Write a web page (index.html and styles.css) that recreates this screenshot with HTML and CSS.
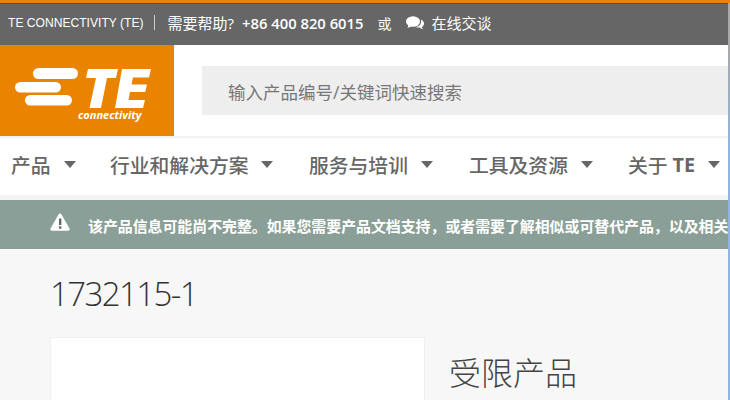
FILE: index.html
```html
<!DOCTYPE html>
<html lang="zh">
<head>
<meta charset="utf-8">
<title>1732115-1</title>
<link rel="stylesheet" href="styles.css">
</head>
<body>
<div class="page">
  <div class="topbar">
    <span class="brand">TE CONNECTIVITY (TE)</span>
    <span class="sep"></span>
    <span class="help">需要帮助?</span>
    <span class="phone">+86 400 820 6015</span>
    <span class="or">或</span>
    <svg class="chat" viewBox="0 0 18 14" width="18" height="14"><ellipse cx="7" cy="5.5" rx="7" ry="5.2" fill="#fff"/><path d="M2.500 8.500 1.500 12 6 10z" fill="#fff"/><path d="M14.800 3.400C16.800 4.300 18 5.800 18 7.500c0 1.400-.8 2.600-2 3.400l.8 2.500-3.300-1.800c-1.400.1-2.800-.1-3.900-.7 3.300-.2 6.400-2.700 5.200-7.500z" fill="#fff"/></svg>
    <span class="chat-text">在线交谈</span>
  </div>
  <header class="header">
    <div class="logo">
      <svg viewBox="0 0 174 91" width="174" height="91">
        <rect x="33" y="23" width="45" height="11" rx="5.500" fill="#fff"/>
        <rect x="15" y="37" width="46" height="10.500" rx="5.200" fill="#fff"/>
        <rect x="25" y="50" width="47" height="10.500" rx="5.200" fill="#fff"/>
        <path d="M88 24H118L116 33H107L101 63H89.500L96 33H86Z" fill="#fff"/>
        <path d="M122 24H151L149 32.500H133L131.500 39.500H147L145.200 47H130L128.500 55H145L143 63H115Z" fill="#fff"/>
        <text x="78" y="74" class="logo-text">connectivity</text>
      </svg>
    </div>
    <div class="search-wrap">
      <div class="search">输入产品编号/关键词快速搜索</div>
    </div>
  </header>
  <nav class="nav">
    <span class="nav-item w1">产品<i class="caret"></i></span>
    <span class="nav-item w2">行业和解决方案<i class="caret"></i></span>
    <span class="nav-item w3">服务与培训<i class="caret"></i></span>
    <span class="nav-item w4">工具及资源<i class="caret"></i></span>
    <span class="nav-item">关于 <b class="te">TE</b><i class="caret"></i></span>
  </nav>
  <div class="notice">
    <svg class="warn" viewBox="0 0 20 18" width="20" height="18"><path d="M10 .5c.7 0 1.200.4 1.500 1l8 14c.6 1.100-.1 2.300-1.400 2.300H1.900C.6 17.800-.1 16.600.5 15.500l8-14c.3-.6.8-1 1.500-1z" fill="#fff"/><rect x="9" y="5.500" width="2.400" height="6.500" fill="#5f6b66"/><rect x="9" y="13.300" width="2.400" height="2.400" fill="#5f6b66"/></svg>
    <span class="notice-text">该产品信息可能尚不完整。如果您需要产品文档支持，或者需要了解相似或可替代产品，以及相关</span>
  </div>
  <main class="main">
    <h1 class="title">1732115-1</h1>
    <div class="content">
      <div class="card"></div>
      <h2 class="status">受限产品</h2>
    </div>
  </main>
  <div class="edge"></div>
</div>
</body>
</html>
```

FILE: styles.css
```css
* { box-sizing: border-box; }
html, body { margin: 0; height: 100%; overflow: hidden; }
body { background: #f7f7f7; font-family: "Open Sans", "Noto Sans CJK SC", sans-serif; }
.page { position: relative; width: 730px; height: 400px; overflow: hidden; }
.edge {
  position: absolute;
  top: 3px;
  right: 0;
  width: 2px;
  height: 397px;
  background: linear-gradient(#a8a8a8, #a8a8a8 12%, #8fb6de 35%, #8fb6de);
}
.topbar {
  height: 45px;
  background: linear-gradient(#666 43px, #fff 43px);
  border-top: 3px solid #e98300;
  box-shadow: inset 0 1px 0 #0b5fa8;
  display: flex;
  align-items: center;
  padding: 0 0 3px 8px;
  color: #fff;
  font-size: 15px;
  white-space: nowrap;
}
.brand { font-family: "Liberation Sans", sans-serif; font-size: 12.100px; }
.sep { width: 1px; height: 15px; background: #ccc; margin: 0 13px 0 10px; }
.help { margin-right: 8px; }
.phone { font-size: 14.800px; font-weight: 600; margin-right: 14px; }
.or { font-size: 14px; margin-right: 14px; }
.chat { margin-right: 8px; }
.header { height: 91px; background: #fff; display: flex; }
.logo { width: 174px; height: 91px; background: #e98300; flex: none; }
.logo svg { display: block; }
.logo-text { fill: #fff; font: italic 700 11px "Open Sans", sans-serif; }
.search-wrap { flex: 1; padding: 21px 0 0 28px; }
.search {
  height: 49px;
  background: #eee;
  color: #777;
  font-size: 17.500px;
  line-height: 53px;
  padding-left: 26px;
}
.nav {
  height: 64px;
  background: #fff;
  display: flex;
  align-items: center;
  padding: 0 0 5px 11px;
  color: #666;
  font-size: 19.800px;
  font-weight: 500;
  white-space: nowrap;
  border-top: 2px solid #f2f2f2;
  border-bottom: 5px solid #f5f5f5;
}
.nav-item { display: flex; align-items: center; }
.te { font-weight: 700; margin-left: 5px; }
.w1 { width: 99px; }
.w2 { width: 199px; }
.w3 { width: 160px; }
.w4 { width: 159px; }
.caret {
  width: 0; height: 0;
  margin-left: 13px;
  border-left: 6.500px solid transparent;
  border-right: 6.500px solid transparent;
  border-top: 7px solid #666;
}
.notice {
  height: 49px;
  background: #8a9f97;
  display: flex;
  align-items: center;
  padding: 2px 0 0 50px;
  color: #fff;
  font-size: 14.900px;
  font-weight: 700;
  white-space: nowrap;
  overflow: hidden;
}
.warn { flex: none; margin: 0 18px 8px 0; }
.main { padding: 0 0 0 50px; }
.title {
  margin: 0;
  padding-top: 26px;
  height: 88px;
  font-size: 33px;
  font-weight: 300;
  line-height: 38px;
  letter-spacing: -1.600px;
  color: #333;
  font-family: "Open Sans", sans-serif;
}
.content { display: flex; }
.card { width: 375px; height: 200px; background: #fff; border: 1px solid #f0f0f0; flex: none; }
.status { margin: 16px 0 0 24px; font-size: 32px; font-weight: 300; line-height: 40px; color: #444; }
```
